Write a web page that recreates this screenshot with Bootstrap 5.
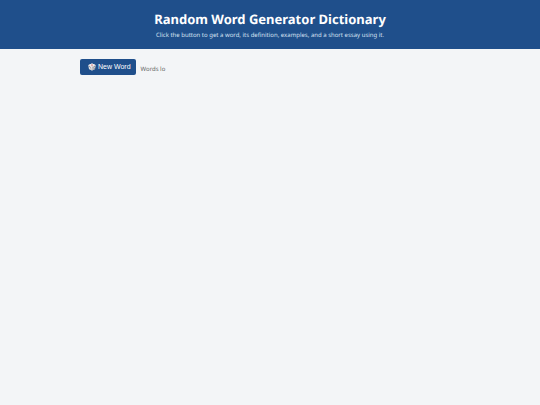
<!DOCTYPE html>
<html lang="en">
<head>
<meta charset="utf-8">
<meta name="viewport" content="width=device-width, initial-scale=1">
<title>Random Word Generator Dictionary</title>
<link href="https://cdn.jsdelivr.net/npm/bootstrap@5.3.0/dist/css/bootstrap.min.css" rel="stylesheet">
<style>
body { background: #f3f5f7; font-family: "Noto Sans", sans-serif; font-size: 6px; line-height: 10px; text-rendering: geometricPrecision; }
.site-header { background: #1f4f8b; padding: 10px 12px 9px; }
.site-title { font-size: 13px; line-height: 18px; margin-bottom: 2px; }
.site-intro { font-size: 6px; line-height: 10px; color: #d6e2f2; }
.page-main { max-width: 380px; padding-top: 10px; }
.btn-word { background: #1f4f8b; color: #fff; font-family: "Liberation Sans", sans-serif; font-size: 7px; line-height: 8px; padding: 4px 5px 4px 8px; border: 0; border-radius: 2px; gap: 2px; }
.btn-word:hover { background: #183f70; color: #fff; }
.word-status { color: #666; padding-top: 3px; margin-left: 5px; }
</style>
</head>
<body>
<header class="site-header text-center text-white">
  <h1 class="site-title fw-bold">Random Word Generator Dictionary</h1>
  <p class="site-intro mb-0">Click the button to get a word, its definition, examples, and a short essay using it.</p>
</header>
<main class="page-main mx-auto">
  <div class="d-flex align-items-center">
    <button type="button" class="btn btn-word d-inline-flex align-items-center">
      <svg width="8" height="8" viewBox="0 0 16 16" aria-hidden="true">
        <path d="M8 .8 15 4 14 12 8 15.2 2 12 1 4Z" fill="#d5d8dc"/>
        <path d="M8 .8 15 4 8 7.2 1 4Z" fill="#f4f4f4"/>
        <path d="M1 4 8 7.2V15.2L2 12Z" fill="#e0e2e5"/>
        <path d="M15 4 8 7.2V15.2L14 12Z" fill="#c5c9ce"/>
        <ellipse cx="8" cy="4" rx="1.8" ry="1" fill="#c33d3d"/>
        <g fill="#6b5a60"><circle cx="3.3" cy="7" r=".9"/><circle cx="6" cy="12" r=".9"/><circle cx="4.7" cy="9.5" r=".9"/><circle cx="10.2" cy="8.6" r=".9"/><circle cx="13" cy="7.1" r=".9"/><circle cx="10.2" cy="12" r=".9"/><circle cx="12.7" cy="10.6" r=".9"/></g>
      </svg>
      <span>New Word</span>
    </button>
    <span class="word-status" role="status">Words lo</span>
  </div>
</main>
<script src="https://cdn.jsdelivr.net/npm/bootstrap@5.3.0/dist/js/bootstrap.bundle.min.js"></script>
</body>
</html>
